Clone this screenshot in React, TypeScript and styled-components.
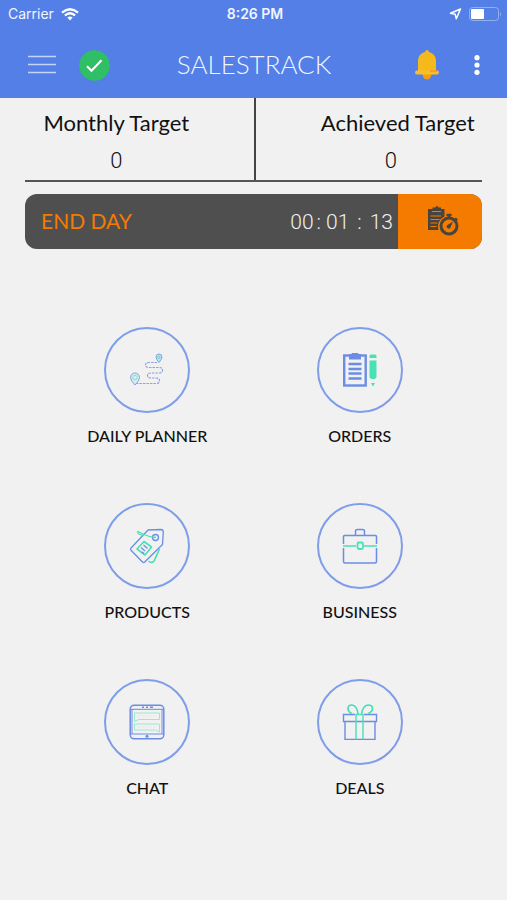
import React from "react";
import styled, { createGlobalStyle } from "styled-components";

const BLUE = "#537fe6";
const LINE = "#6b8de3";
const MINT = "#48e0b5";
const ORANGE = "#f47b00";
const SLATE = "#4f4f4f";
const TEXT_FONT = `Lato, "Open Sans", sans-serif`;
const DIGIT_FONT = `Roboto, "Open Sans", sans-serif`;

const GlobalStyle = createGlobalStyle`
  * { box-sizing: border-box; }
  body {
    margin: 0;
    background: #f1f1f1;
    color: #111;
    font-family: ${TEXT_FONT};
  }
  button { font: inherit; color: inherit; background: none; border: 0; padding: 0; cursor: pointer; }
  svg { display: block; }
`;

const Screen = styled.div`
  min-height: 100vh;
  background: #f1f1f1;
`;

const Header = styled.header`
  background: ${BLUE};
  color: #f1f5ff;
  padding-bottom: 8px;
`;

const StatusBar = styled.div`
  display: grid;
  grid-template-columns: 1fr auto 1fr;
  align-items: center;
  height: 28px;
  padding: 0 5px 0 8px;
  font-family: Inter, sans-serif;
  font-size: 14px;
  line-height: 20px;
`;

const StatusSide = styled.div<{ $end?: boolean }>`
  display: flex;
  align-items: center;
  justify-content: ${(p) => (p.$end ? "flex-end" : "flex-start")};
  gap: 7px;
`;

const Clock = styled.time`
  font-weight: 600;
`;

const NavBar = styled.nav`
  display: grid;
  grid-template-columns: 1fr auto 1fr;
  align-items: center;
  height: 62px;
  padding: 12px 27px 0 28px;
`;

const NavSide = styled.div<{ $end?: boolean }>`
  display: flex;
  align-items: center;
  justify-content: ${(p) => (p.$end ? "flex-end" : "flex-start")};
  gap: ${(p) => (p.$end ? "35px" : "23px")};
`;

const Title = styled.h1`
  margin: 0;
  font-size: 26px;
  line-height: 32px;
  font-weight: 300;
  padding-bottom: 2px;
`;

const Content = styled.main`
  padding: 0 25px;
`;

const Targets = styled.dl`
  display: grid;
  grid-template-columns: 1fr 1fr;
  margin: 0;
  border-bottom: 2px solid #555;
`;

const Target = styled.div<{ $second?: boolean }>`
  display: flex;
  flex-direction: column;
  align-items: center;
  gap: 8px;
  padding: ${(p) => (p.$second ? "10px 0 4px 44px" : "10px 46px 4px 0")};
  border-left: ${(p) => (p.$second ? "2px solid #444" : "0")};
`;

const TargetName = styled.dt<{ $inset?: boolean }>`
  font-size: 22px;
  line-height: 30px;
  white-space: nowrap;
  padding-left: ${(p) => (p.$inset ? "14px" : "0")};
`;

const TargetValue = styled.dd`
  margin: 0;
  font-family: ${DIGIT_FONT};
  font-size: 22px;
  line-height: 30px;
  font-weight: 300;
`;

const DayBar = styled.section`
  display: flex;
  align-items: stretch;
  height: 55px;
  margin-top: 12px;
  border-radius: 12px;
  overflow: hidden;
  background: ${SLATE};
`;

const EndDay = styled.button`
  flex: 1;
  padding: 0 0 2px 16px;
  text-align: left;
  font-size: 21px;
  line-height: 30px;
  color: ${ORANGE};
`;

const Timer = styled.div`
  display: flex;
  align-items: center;
  padding-right: 5px;
  font-family: ${DIGIT_FONT};
  font-size: 21px;
  line-height: 30px;
  font-weight: 300;
  color: #f1f1f1;
`;

const Colon = styled.span<{ $wide?: boolean }>`
  padding: ${(p) => (p.$wide ? "0 8px" : "0 5px 0 3px")};
`;

const LogButton = styled.button`
  display: flex;
  align-items: center;
  justify-content: center;
  width: 84px;
  padding-left: 6px;
  background: ${ORANGE};
`;

const Menu = styled.ul`
  display: grid;
  grid-template-columns: 1fr 1fr;
  row-gap: 56px;
  margin: 78px 16px 0;
  padding: 0;
  list-style: none;
`;

const MenuItem = styled.li`
  display: flex;
  justify-content: center;
`;

const MenuButton = styled.button`
  display: flex;
  flex-direction: column;
  align-items: center;
  gap: 12px;
  font-size: 16px;
  line-height: 22px;
  font-weight: 500;
  white-space: nowrap;
`;

const Ring = styled.span`
  display: flex;
  align-items: center;
  justify-content: center;
  width: 86px;
  height: 86px;
  border: 2px solid #7f9dea;
  border-radius: 50%;
`;

const WifiIcon = () => (
  <svg width="18" height="13" viewBox="0 0 18 13" fill="none" stroke="#fff" strokeWidth="2.3" aria-hidden="true">
    <path d="M1 4.6Q9-2.2 17 4.6M3.9 7.5Q9 3 14.1 7.5" />
    <path d="M9 12.6 6.3 9.6Q9 7.5 11.7 9.6Z" fill="#fff" stroke="none" />
  </svg>
);

const LocationIcon = () => (
  <svg width="13" height="12" viewBox="0 0 13 12" fill="none" stroke="#fff" strokeWidth="1.5" strokeLinejoin="round" aria-hidden="true">
    <path d="M11.5 1 1.5 5.2 6.2 6.2 7.3 10.8Z" />
  </svg>
);

const BatteryIcon = () => (
  <svg width="33" height="15" viewBox="0 0 33 15" aria-hidden="true">
    <rect x="0.5" y="0.5" width="29" height="13" rx="3" fill="none" stroke="#94aff0" />
    <rect x="2" y="2" width="13" height="10" rx="1" fill="#fff" />
    <path d="M31 5Q33 7 31 9.500Z" fill="#94aff0" />
  </svg>
);

const MenuLines = () => (
  <svg width="28" height="20" viewBox="0 0 28 20" stroke="#c5d4f9" strokeWidth="1.5" aria-hidden="true">
    <path d="M0 1.500h28M0 9.500h28M0 17.500h28" />
  </svg>
);

const CheckBadge = () => (
  <svg width="31" height="31" viewBox="0 0 31 31" fill="none" aria-hidden="true">
    <circle cx="15.5" cy="15.5" r="15.3" fill="#2fbf64" />
    <path d="m8 16.300 4.500 4.500 10-10.600" stroke="#fff" strokeWidth="2" />
  </svg>
);

const BellIcon = () => (
  <svg width="24" height="30" viewBox="0 0 24 30" aria-hidden="true">
    <path d="M7.5 24h9q-.4 5.5-4.500 5.500t-4.500-5.500Z" fill="#f0a010" />
    <path d="M12 0q1.700 0 1.900 2.100C18.500 3 21 6.800 21 11.500V21H3v-9.500C3 6.800 5.500 3 10.100 2.100Q10.300 0 12 0Z" fill="#f6b91c" />
    <rect x="0" y="20.500" width="24" height="4" rx="2" fill="#fbbd2c" />
    <path d="M15 20.500h7v1.200h-7Z" fill="#f0960a" />
  </svg>
);

const DotsIcon = () => (
  <svg width="6" height="20" viewBox="0 0 6 20" fill="#fff" aria-hidden="true">
    <circle cx="3" cy="2.700" r="2.600" />
    <circle cx="3" cy="10" r="2.600" />
    <circle cx="3" cy="17.300" r="2.600" />
  </svg>
);

const LogIcon = () => (
  <svg width="32" height="31" viewBox="0 0 32 31" fill="none" aria-hidden="true">
    <path d="M1 3h4.500V1.500h2.800Q9 0 10 0t1.700 1.500H14V3h3.500v7.500A11 11 0 0 0 11.500 24H1Z" fill="#49443c" />
    <path d="M5 5.500h9M3.500 10h10.500M3.500 13.500h9M3.500 17h7M3.500 20.500h6" stroke={ORANGE} strokeWidth="1.100" />
    <circle cx="22" cy="20" r="8" stroke="#49443c" strokeWidth="3" />
    <path d="M19.500 9h5M22 9v3M28 12.500l2 2" stroke="#49443c" strokeWidth="2.500" />
    <path d="m26 15.500-2.500 6a2 2 0 1 1-3-2.500Z" fill="#49443c" />
  </svg>
);

const PlannerIcon = () => (
  <svg width="34" height="34" viewBox="0 0 34 34" fill="none" aria-hidden="true">
    <path
      d="M27 9.500H19q-3.500 0-3.500 2.500t3.500 2.500H29q3.500 0 3.500 2.700T29 20h-8q-3.500 0-3.500 2.500T21 25h5q3.500 0 3.500 2.800T26 30.500H6"
      stroke="#8d9fe5"
      strokeWidth="1.200"
      strokeDasharray="2.500 1"
    />
    <path d="M5 32Q.5 27.500.5 24.500a4.500 4.500 0 0 1 9 0Q9.500 27.500 5 32Z" fill="#d3eff0" stroke="#86a2e7" />
    <circle cx="5" cy="24.500" r="2.300" stroke="#83dfcb" />
    <path d="M29 9.500Q26 6 26 4a3 3 0 0 1 6 0Q32 6 29 9.500Z" fill="#bde6e5" stroke="#86a2e7" />
    <circle cx="29" cy="4.200" r="1.200" stroke="#6fd8c1" />
  </svg>
);

const OrdersIcon = () => (
  <svg width="34" height="34" viewBox="0 0 34 34" fill="none" aria-hidden="true">
    <rect x="1.200" y="2.500" width="21.500" height="30" stroke={LINE} strokeWidth="2.400" />
    <path d="M6 1h2.500q0-1 1-1h5q1 0 1 1H18v5.500H6Z" fill={LINE} />
    <path d="M5.500 11h13M5.500 16h13M5.500 20.500h13M5.500 25.500h13" stroke={LINE} strokeWidth="2.500" />
    <path d="M26.500 5V3q0-1.500 1.500-1.500h4q1.500 0 1.500 1.500v2ZM26.500 7.500h7V24L32 26h-4l-1.500-2ZM28 30h4l-2 3.500Z" fill={MINT} />
  </svg>
);

const ProductsIcon = () => (
  <svg width="36" height="36" viewBox="0 0 36 36" fill="none" strokeWidth="1.300" strokeLinejoin="round" aria-hidden="true">
    <path d="M19.500 33q2 2 4 1.200 1.500-.7 2.200-2.500L30.500 21" stroke={MINT} strokeWidth="1.600" />
    <path d="M19 2 1.800 20.300q-.8 1 .2 2L13.500 34q1.200 1 2.200 0L33.500 16.500 34.300 4q-.1-2.400-2.500-2.500Z" stroke={LINE} />
    <path d="M15 13.500 22.500 19 16 27 8 21Z" stroke={MINT} strokeWidth="1.600" />
    <path d="m14.500 17 4 3.500M12 19.500l4 3.500M13 24l2 1.500" stroke={LINE} />
    <circle cx="26.500" cy="9.500" r="3" stroke={LINE} />
    <path d="M27 9.500Q20 9 15 6.500T9 3.500q-1 1 1 2.500 2 1.200 5 1.500" stroke={MINT} />
  </svg>
);

const BusinessIcon = () => (
  <svg width="36" height="36" viewBox="0 0 36 36" fill="none" strokeWidth="1.500" strokeLinejoin="round" aria-hidden="true">
    <path d="M1.500 16V8.500Q1.500 7.500 2.500 7.500h31q1 0 1 1V16" stroke={LINE} />
    <path d="M1.500 20v13.500q0 1.500 1.500 1.500h30q1.500 0 1.500-1.500V20" stroke={LINE} />
    <path d="M13.500 7V3.500q0-2 2-2h5q2 0 2 2V7" stroke={LINE} />
    <path d="M1 18h13M22 18h13" stroke={MINT} />
    <rect x="15.500" y="14.500" width="5.500" height="6.500" rx="1.500" stroke={MINT} strokeWidth="1.800" />
  </svg>
);

const ChatIcon = () => (
  <svg width="36" height="36" viewBox="0 0 36 36" fill="none" aria-hidden="true">
    <rect x="1.200" y="1.200" width="33.600" height="33.600" rx="4" stroke={LINE} strokeWidth="1.500" />
    <path d="M2 5.300h32M2 30h32M3 5v25M33 5v25" stroke={LINE} />
    <path d="M13 3.300h2M17 3.300h2M21 3.300h3" stroke={LINE} strokeWidth="1.500" />
    <circle cx="18" cy="32.300" r="1.500" fill={LINE} />
    <path d="M5.500 9h25v6.500h-21l-4 2ZM5.500 20h25v8l-4-2h-21Z" stroke="#9be8d2" />
    <path d="M8 12h20M8 23h19" stroke="#cdeee6" strokeDasharray="1 1" />
  </svg>
);

const DealsIcon = () => (
  <svg width="36" height="36" viewBox="0 0 36 36" fill="none" strokeWidth="1.400" aria-hidden="true">
    <path d="M13 10.500H1.500v7H13M22 10.500h12.500v7H22M3 17.500v18h10M22 35.500h11v-18M13 17.500h9M13 35.500h9" stroke={LINE} />
    <path d="M14 10.500v25M21 10.500v25M13.500 10.500h8" stroke={MINT} />
    <path d="M16 10Q15 1.500 10 1 6 1 6 4.500T10 9.500M19.500 10Q21 1.500 26 1q4.500 0 4.500 3.500T26 9.500" stroke={MINT} strokeWidth="1.700" />
  </svg>
);

const MENU = [
  { label: "DAILY PLANNER", Icon: PlannerIcon },
  { label: "ORDERS", Icon: OrdersIcon },
  { label: "PRODUCTS", Icon: ProductsIcon },
  { label: "BUSINESS", Icon: BusinessIcon },
  { label: "CHAT", Icon: ChatIcon },
  { label: "DEALS", Icon: DealsIcon },
];

export default function App() {
  return (
    <Screen>
      <GlobalStyle />
      <Header>
        <StatusBar>
          <StatusSide>
            <span>Carrier</span>
            <WifiIcon />
          </StatusSide>
          <Clock>8:26 PM</Clock>
          <StatusSide $end>
            <LocationIcon />
            <BatteryIcon />
          </StatusSide>
        </StatusBar>
        <NavBar>
          <NavSide>
            <button type="button" aria-label="Open menu">
              <MenuLines />
            </button>
            <button type="button" aria-label="Day status">
              <CheckBadge />
            </button>
          </NavSide>
          <Title>SALESTRACK</Title>
          <NavSide $end>
            <button type="button" aria-label="Notifications">
              <BellIcon />
            </button>
            <button type="button" aria-label="More options">
              <DotsIcon />
            </button>
          </NavSide>
        </NavBar>
      </Header>
      <Content>
        <Targets>
          <Target>
            <TargetName>Monthly Target</TargetName>
            <TargetValue>0</TargetValue>
          </Target>
          <Target $second>
            <TargetName $inset>Achieved Target</TargetName>
            <TargetValue>0</TargetValue>
          </Target>
        </Targets>
        <DayBar>
          <EndDay type="button">END DAY</EndDay>
          <Timer role="timer">
            <span>00</span>
            <Colon>:</Colon>
            <span>01</span>
            <Colon $wide>:</Colon>
            <span>13</span>
          </Timer>
          <LogButton type="button" aria-label="Day log">
            <LogIcon />
          </LogButton>
        </DayBar>
        <Menu>
          {MENU.map(({ label, Icon }) => (
            <MenuItem key={label}>
              <MenuButton type="button">
                <Ring>
                  <Icon />
                </Ring>
                {label}
              </MenuButton>
            </MenuItem>
          ))}
        </Menu>
      </Content>
    </Screen>
  );
}
